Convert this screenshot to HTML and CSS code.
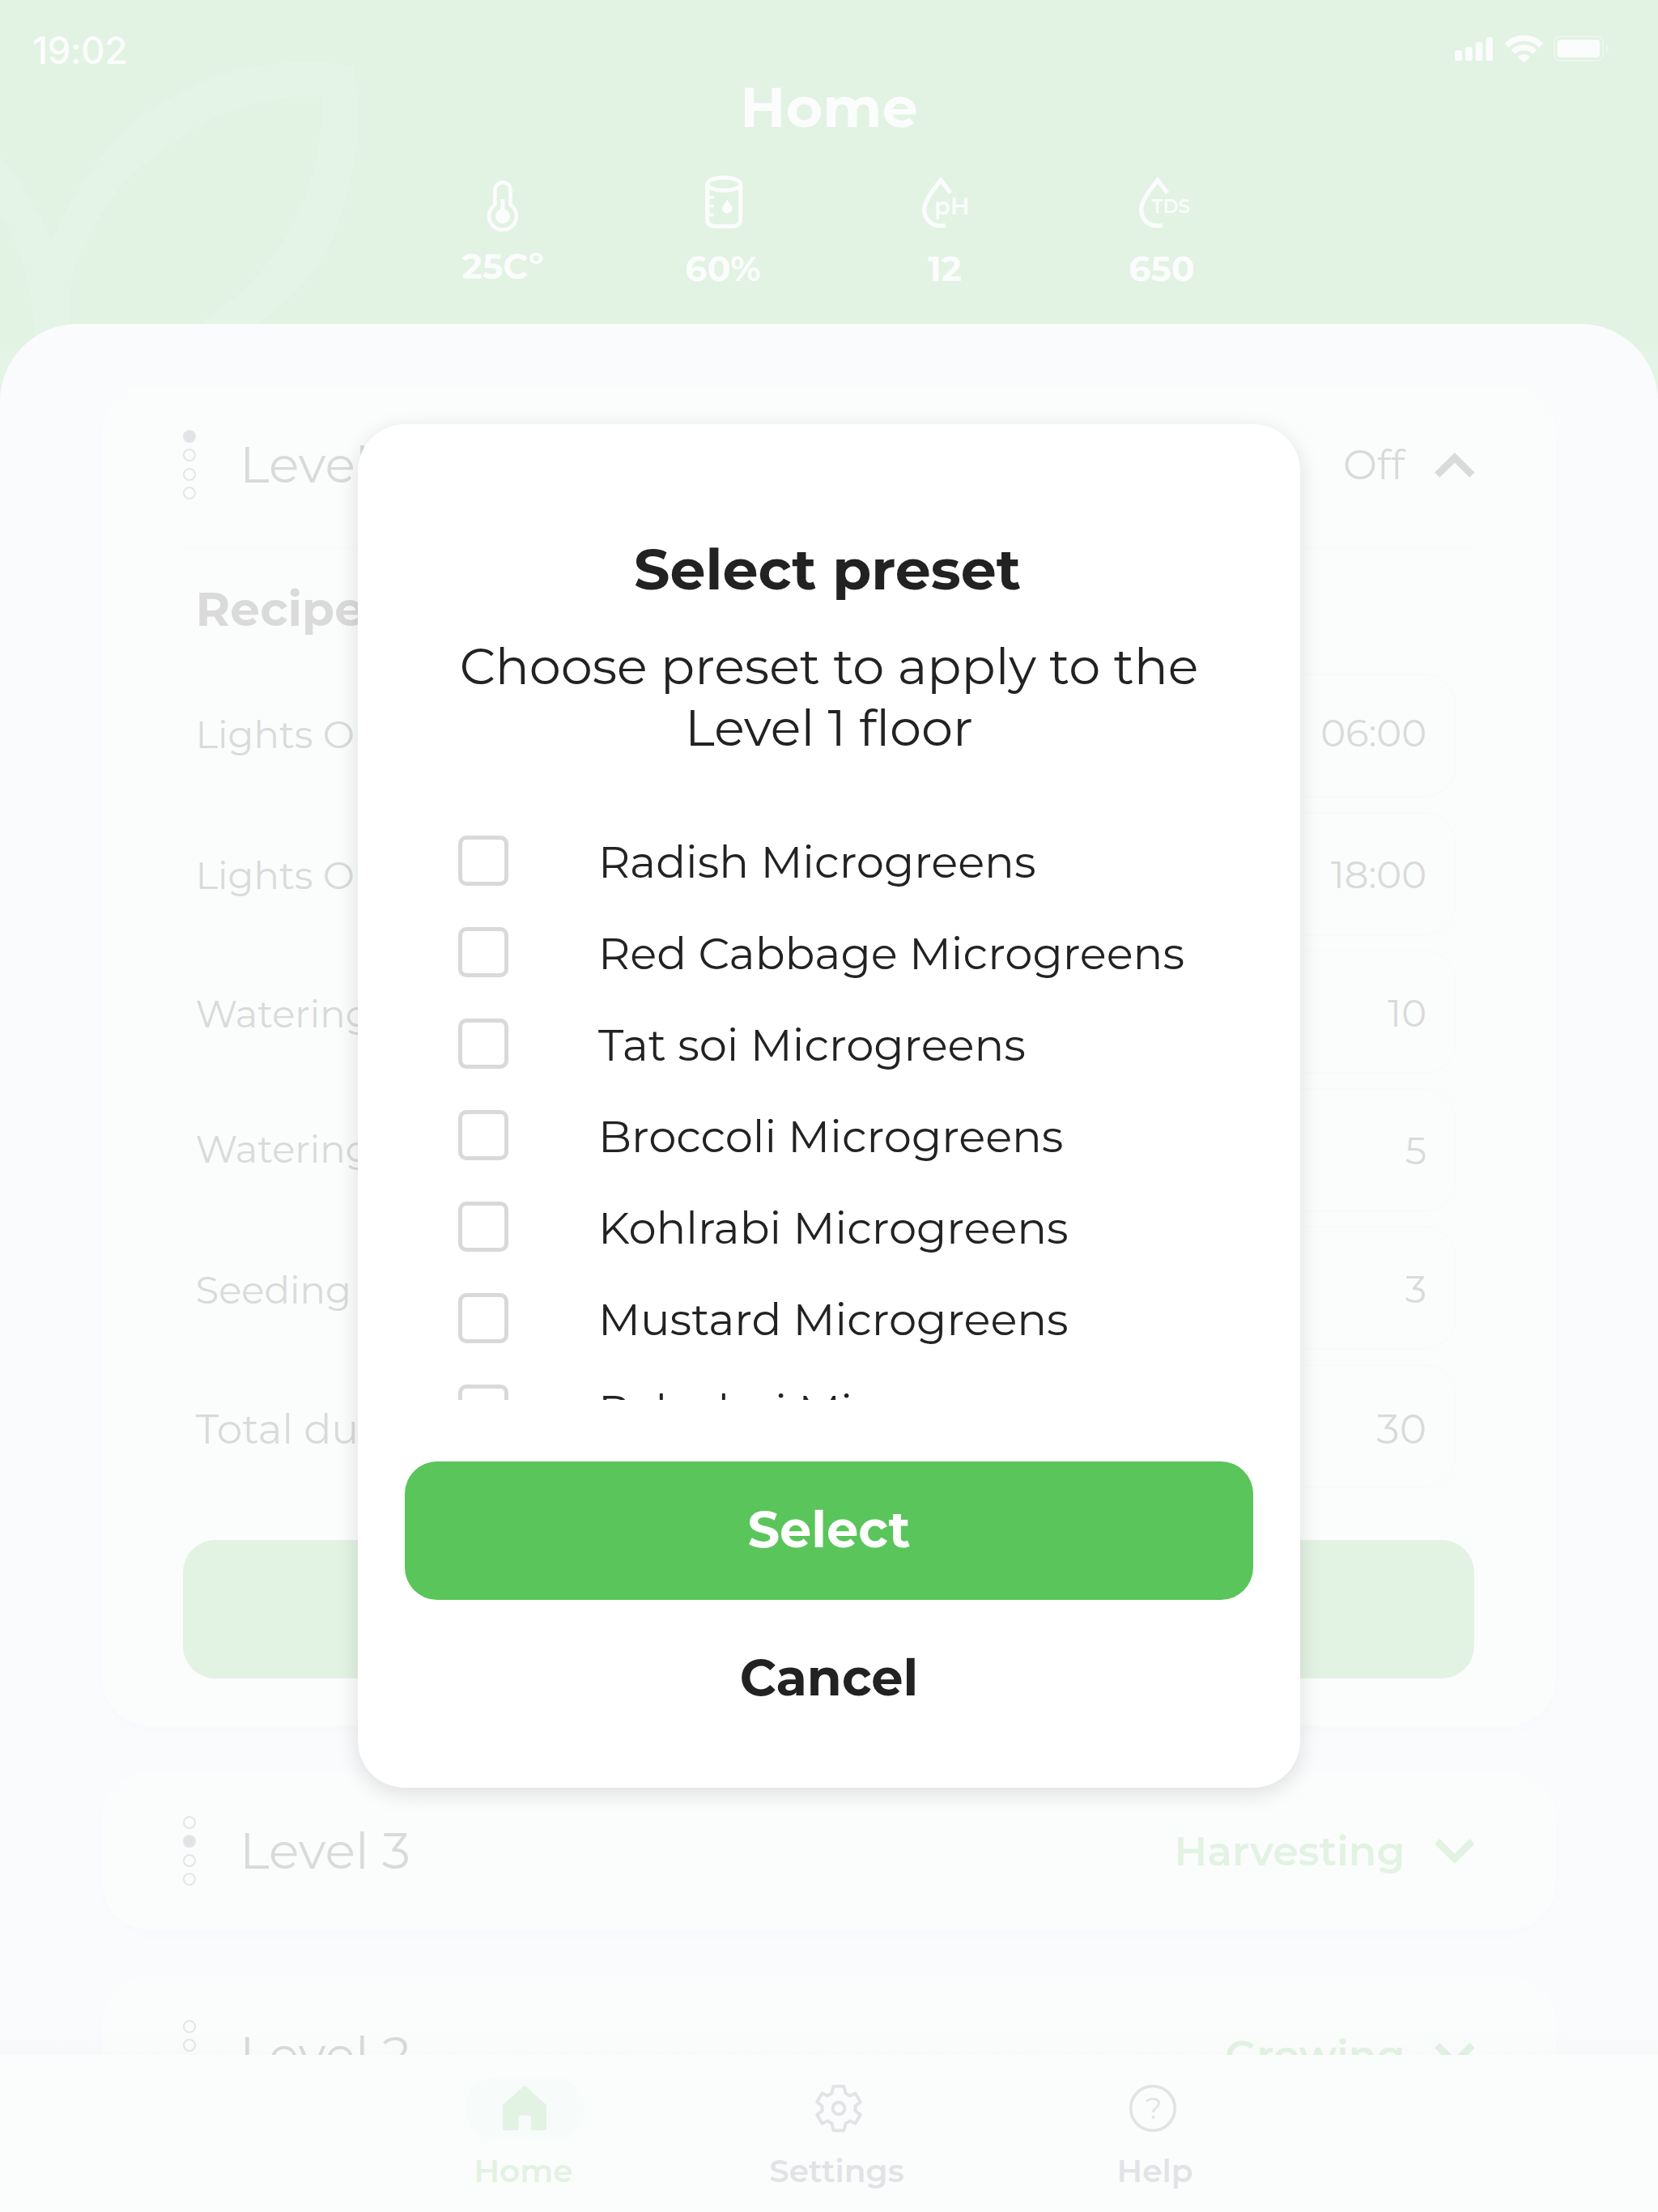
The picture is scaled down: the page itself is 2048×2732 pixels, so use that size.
FILE: index.html
```html
<!DOCTYPE html>
<html lang="en">
<head>
<meta charset="utf-8">
<title>Home</title>
<link rel="stylesheet" href="styles.css">
</head>
<body>
<div class="screen">
  <div class="header-bg">
    <svg width="2048" height="434" viewBox="0 0 2048 434" fill="#e4f4e6">
      <path d="M0 193C12 206 21 218 29 233C44 256 57 281 63 300C78 258 104 222 134 182C166 146 200 124 237 108C262 96 280 89 299 86C326 79 350 77 379 77C402 77 420 79 436 82C440 106 442 122 442 145C443 190 431 238 415 283C390 346 358 368 318 401L300 434H200L246 401C278 376 300 363 321 337C346 306 362 282 375 250C387 216 394 186 396 160C398 144 398 132 398 120C392 119 386 119 379 119C358 120 340 121 321 125C286 134 255 148 228 167C196 188 168 208 147 233C122 266 102 300 91 333C87 356 86 378 86 401V434H42V415C41 370 34 336 22 307C16 290 8 276 0 265Z"/>
    </svg>
  </div>

  <header class="header">
    <div class="status">
      <span class="time">19:02</span>
      <svg width="190" height="39" viewBox="1797 43 190 39" fill="#fbfdfc">
        <rect x="1797" y="62" width="9" height="13" rx="2.5"/>
        <rect x="1810" y="57.7" width="8.6" height="17.3" rx="2.5"/>
        <rect x="1822.6" y="52" width="8.6" height="23" rx="2.5"/>
        <rect x="1835.4" y="46" width="8.6" height="29" rx="2.5"/>
        <path d="M1861 56.1A30.2 30.2 0 0 1 1903.8 56.1M1869.1 64.2A18.8 18.8 0 0 1 1895.7 64.2" fill="none" stroke="#fbfdfc" stroke-width="7.2"/>
        <path d="M1882.4 77.5L1875 70A10.6 10.6 0 0 1 1889.8 70Z"/>
        <rect x="1920" y="45" width="60" height="30" rx="7" fill="none" stroke="#ecf6ee" stroke-width="2"/>
        <rect x="1923.7" y="49" width="52.4" height="22" rx="3.5"/>
        <path d="M1983.4 54.5C1988.2 56 1988.2 64 1983.4 65.5Z" fill="#ecf6ee"/>
      </svg>
    </div>
    <h1 class="title">Home</h1>
    <div class="metrics">
      <div class="metric metric-temp">
        <svg width="72" height="72" viewBox="585 216 72 72">
          <path d="M611.4 253V235a9.6 9.6 0 0 1 19.2 0V253a16.9 16.9 0 1 1-19.2 0Z" fill="none" stroke="#fbfdfc" stroke-width="4.6"/>
          <circle cx="621" cy="267" r="9" fill="#fbfdfc"/>
          <path d="M618.4 246h5.2v16h-5.2Z" fill="#fbfdfc"/>
        </svg>
        <span>25Cº</span>
      </div>
      <div class="metric">
        <svg width="72" height="72" viewBox="857 216 72 72" fill="none" stroke="#fbfdfc">
          <path d="M873.6 228V270q0 9.4 9.4 9.4h22.3q9.4 0 9.4-9.4V228" stroke-width="5"/>
          <path d="M873.6 243.7h8.4M873.6 254.5h8.4M873.6 265.5h8.4" stroke-width="3.6"/>
          <ellipse cx="894.2" cy="227.3" rx="20.5" ry="8" stroke-width="5"/>
          <path d="M898.3 246.5C901 251 904.6 254.5 904.6 257.8C904.6 261 901.7 263.5 898.3 263.5S892.2 261 892.2 257.8C892.2 254.5 895.6 251 898.3 246.5Z" fill="#fbfdfc" stroke="none"/>
        </svg>
        <span>60%</span>
      </div>
      <div class="metric metric-ph">
        <svg width="72" height="72" viewBox="1129 216 72 72">
          <path d="M1174 238.5L1162 222.5C1150 238 1141.7 249 1141.7 259C1141.7 270.5 1150.5 279 1162 279Q1165 279 1168 278" fill="none" stroke="#fbfdfc" stroke-width="5.4"/>
          <text x="1154" y="265" class="drop-label" font-size="29">pH</text>
        </svg>
        <span>12</span>
      </div>
      <div class="metric metric-tds">
        <svg width="72" height="72" viewBox="1401 216 72 72">
          <path d="M1442 238.5L1430 222.5C1418 238 1409.7 249 1409.7 259C1409.7 270.5 1418.5 279 1430 279Q1433 279 1436 278" fill="none" stroke="#fbfdfc" stroke-width="5.4"/>
          <text x="1422.5" y="262.8" class="drop-label" font-size="23.2">TDS</text>
        </svg>
        <span>650</span>
      </div>
    </div>
  </header>

  <main class="panel">
    <section class="card card-open">
      <div class="card-head">
        <div class="dots"><i class="on"></i><i></i><i></i><i></i></div>
        <h2 class="level">Level 4</h2>
        <span class="state off">Off</span>
        <svg class="chevron" width="50" height="31" viewBox="0 0 50 31"><path d="M0 24.5L24.9 0L49.5 24.5L43.3 30.8L24.9 12.5L6.3 30.8Z" fill="#dadada"/></svg>
      </div>
      <div class="divider"></div>
      <h3 class="recipe">Recipe</h3>
      <div class="rows">
        <div class="row"><span class="label">Lights ON</span><span class="field">06:00</span></div>
        <div class="row"><span class="label">Lights OFF</span><span class="field">18:00</span></div>
        <div class="row"><span class="label">Watering on</span><span class="field">10</span></div>
        <div class="row"><span class="label">Watering off</span><span class="field">5</span></div>
        <div class="row"><span class="label">Seeding</span><span class="field">3</span></div>
        <div class="row total"><span class="label">Total duration</span><span class="field">30</span></div>
      </div>
      <div class="card-button"></div>
    </section>
    <section class="card">
      <div class="card-head">
        <div class="dots"><i></i><i class="on"></i><i></i><i></i></div>
        <h2 class="level">Level 3</h2>
        <span class="state">Harvesting</span>
        <svg class="chevron" width="50" height="31" viewBox="0 0 50 31"><path d="M0 6.3L6.3 0L24.9 18.5L43.3 0L49.5 6.3L24.9 31Z" fill="#e2f2e3"/></svg>
      </div>
    </section>
    <section class="card">
      <div class="card-head">
        <div class="dots"><i></i><i></i><i class="on"></i><i></i></div>
        <h2 class="level">Level 2</h2>
        <span class="state">Growing</span>
        <svg class="chevron" width="50" height="31" viewBox="0 0 50 31"><path d="M0 6.3L6.3 0L24.9 18.5L43.3 0L49.5 6.3L24.9 31Z" fill="#e2f2e3"/></svg>
      </div>
    </section>
  </main>

  <nav class="nav">
    <a class="nav-item active">
      <span class="pill">
        <svg width="54" height="56" viewBox="0 0 54 56"><path d="M25.5 1Q27 -.4 28.5 1L54 24V52.5Q54 55 51.5 55H37.5Q35 55 35 52.5V40.5Q35 36.5 31 36.5H23.5Q19.5 36.5 19.5 40.5V52.5Q19.5 55 17 55H2.5Q0 55 0 52.5V24Z" fill="#e2f2e3"/></svg>
      </span>
      <span class="nav-label">Home</span>
    </a>
    <a class="nav-item">
      <span class="pill">
        <svg width="62" height="62" viewBox="-31 -31 62 62" fill="none" stroke="#e2e3e6" stroke-width="4" stroke-linejoin="round">
          <path d="M-6.3 -27.2H6.3L8.8 -18.4Q11.5 -17.3 13.8 -15.5L20.6 -18.6L26.8 -8L20.3 -2.7Q20.7 0 20.3 2.7L26.8 8L20.6 18.6L13.8 15.5Q11.5 17.3 8.8 18.4L6.3 27.2H-6.3L-8.8 18.4Q-11.5 17.3 -13.8 15.5L-20.6 18.6L-26.8 8L-20.3 2.7Q-20.7 0 -20.3 -2.7L-26.8 -8L-20.6 -18.6L-13.8 -15.5Q-11.5 -17.3 -8.8 -18.4Z"/>
          <circle r="7.4"/>
        </svg>
      </span>
      <span class="nav-label nav-settings">Settings</span>
    </a>
    <a class="nav-item">
      <span class="pill">
        <svg width="62" height="62" viewBox="-31 -31 62 62"><circle r="27.3" fill="none" stroke="#e2e3e6" stroke-width="3.8"/><text x="1" y="13" text-anchor="middle" class="question">?</text></svg>
      </span>
      <span class="nav-label nav-help">Help</span>
    </a>
  </nav>

  <div class="modal" role="dialog">
    <h2 class="modal-title">Select preset</h2>
    <p class="modal-text">Choose preset to apply to the<br>Level 1 floor</p>
    <div class="presets">
      <label class="preset"><i class="box"></i><span>Radish Microgreens</span></label>
      <label class="preset"><i class="box"></i><span>Red Cabbage Microgreens</span></label>
      <label class="preset"><i class="box"></i><span>Tat soi Microgreens</span></label>
      <label class="preset"><i class="box"></i><span>Broccoli Microgreens</span></label>
      <label class="preset"><i class="box"></i><span>Kohlrabi Microgreens</span></label>
      <label class="preset"><i class="box"></i><span>Mustard Microgreens</span></label>
      <label class="preset"><i class="box"></i><span>Pak choi Microgreens</span></label>
    </div>
    <button class="select">Select</button>
    <button class="cancel">Cancel</button>
  </div>
</div>
</body>
</html>
```
FILE: styles.css
```css
* { box-sizing: border-box; margin: 0; padding: 0; }

body {
  width: 2048px;
  height: 2732px;
  overflow: hidden;
  font-family: Montserrat, Inter, "Liberation Sans", sans-serif;
}

i { font-style: normal; }
svg { display: block; flex: none; }

.screen {
  position: relative;
  display: flex;
  flex-direction: column;
  width: 2048px;
  height: 2732px;
  background: #e4f4e6;
}

/* header */
.header-bg {
  position: absolute;
  inset: 0 0 auto;
  height: 434px;
  background: #e2f2e3;
}

.header {
  position: relative;
  flex: none;
  height: 400px;
  color: #fbfdfc;
}

.status {
  display: flex;
  align-items: center;
  justify-content: space-between;
  height: 92px;
  padding: 33px 61px 0 40px;
}

.time { font: 450 46px/59px Inter, sans-serif; letter-spacing: -.014em; }

.title {
  font-size: 69.7px;
  line-height: 80px;
  font-weight: 700;
  text-align: center;
}

.metrics {
  display: flex;
  justify-content: center;
  margin-top: 44px;
  padding-left: 10px;
}

.metric {
  display: flex;
  flex-direction: column;
  align-items: center;
  gap: 19px;
  width: 272px;
  font-size: 42.6px;
  line-height: 50px;
  font-weight: 700;
}

.metric-temp { gap: 16px; }
.metric-ph span { padding-left: 4px; }
.metric-tds span { padding-right: 4px; }
.drop-label { fill: #fbfdfc; font-weight: 600; }

/* level cards */
.panel {
  position: relative;
  flex: none;
  display: flex;
  flex-direction: column;
  gap: 58px;
  height: 2137.5px;
  padding: 77px 126px 0;
  overflow: hidden;
  border-radius: 96px 96px 0 0;
  background: #fafbfd;
}

.panel::after {
  content: "";
  position: absolute;
  inset: auto 0 0;
  height: 36px;
  background: linear-gradient(rgba(40, 0, 40, 0), rgba(40, 0, 40, .012));
  pointer-events: none;
}

.card {
  flex: none;
  padding: 0 100px;
  border-radius: 58px;
  background: #fbfdfc;
  box-shadow: 0 7px 12px #f8f9fc;
}

.card-open { height: 1654px; }

.card-head {
  display: flex;
  align-items: center;
  height: 194px;
}

.dots {
  display: flex;
  flex-direction: column;
  gap: 7.3px;
}

.dots i {
  width: 16px;
  height: 16px;
  border: 2px solid #e4e5e7;
  border-radius: 50%;
}

.dots .on { background: #e2e3e6; }

.level {
  margin: 0 auto 0 54px;
  color: #dadada;
  font-size: 62px;
  font-weight: 400;
}

.state {
  margin-right: 36.5px;
  color: #e2f2e3;
  font-size: 50.5px;
  font-weight: 600;
}

.off {
  margin-right: 37px;
  color: #dadada;
  font-size: 50px;
  font-weight: 400;
}

.divider {
  height: 3px;
  margin-top: 5px;
  background: #fafbfb;
}

.recipe {
  margin: 39px 0 44px 15.5px;
  color: #dadada;
  font-size: 58.3px;
  line-height: 70px;
  font-weight: 700;
}

.rows {
  display: flex;
  flex-direction: column;
  gap: 17.6px;
  padding: 0 23.5px 0 15.5px;
}

.row {
  display: flex;
  align-items: center;
  justify-content: space-between;
  height: 153px;
  color: #dadada;
  font-size: 46.6px;
  font-weight: 400;
}

.field {
  width: 500px;
  height: 153px;
  padding: 2px 34.5px 0 0;
  border: 2px solid #f9fafa;
  border-radius: 40px;
  line-height: 149px;
  text-align: right;
}

.row:nth-child(1) .label { margin-top: -3px; }
.row:nth-child(1) .field { padding-top: 0; line-height: 143px; }
.row:nth-child(2) .label { margin-top: 5px; }
.row:nth-child(2) .field { padding-top: 1px; }
.row:nth-child(3) .label { margin-top: 5px; }
.row:nth-child(4) .label { margin-top: -2px; }
.row:nth-child(4) .field { padding-top: 1px; }
.row:nth-child(5) .label { margin-top: 6px; }

.row.total { font-size: 50.4px; }
.row.total .label { margin-top: 8px; }
.row.total .field { padding-top: 4px; }

.card-button {
  height: 171px;
  margin: 64px 1px 0 0;
  border-radius: 40px;
  background: #e2f2e3;
}

/* bottom navigation */
.nav {
  flex: none;
  display: flex;
  justify-content: center;
  height: 194.5px;
  padding: 27.5px 0 0 24px;
  background: #fbfdfc;
}

.nav-item {
  display: flex;
  flex-direction: column;
  align-items: center;
  gap: 13px;
  width: 388px;
  color: #e2e3e6;
}

.pill {
  display: flex;
  align-items: center;
  justify-content: center;
  width: 147px;
  height: 78px;
  border-radius: 39px;
}

.active { color: #e2f2e3; }
.active .pill { background: #f7fbfa; }

.nav-label {
  padding-right: 3px;
  font-size: 39px;
  line-height: 50px;
  font-weight: 600;
}

.nav-settings { padding-right: 5px; }
.nav-help { padding: 0 0 0 5px; }
.question { fill: #e2e3e6; font-size: 37px; font-weight: 400; }

/* preset dialog */
.modal {
  position: absolute;
  left: 442px;
  top: 523.5px;
  display: flex;
  flex-direction: column;
  width: 1164px;
  height: 1684.5px;
  padding: 139px 58px 0;
  border-radius: 58px;
  background: #fff;
  box-shadow: 0 7px 28px rgba(0, 0, 0, .12);
  color: #222;
  text-align: center;
}

.modal-title {
  padding-right: 4px;
  font-size: 69.7px;
  line-height: 80px;
  font-weight: 700;
}

.modal-text {
  margin-top: 42px;
  font-size: 62.2px;
  line-height: 76.5px;
  font-weight: 400;
}

.presets {
  display: flex;
  flex-direction: column;
  gap: 51px;
  height: 696.5px;
  margin-top: 94.5px;
  padding-left: 66px;
  overflow: hidden;
}

.preset {
  display: flex;
  flex: none;
  gap: 111px;
  height: 62px;
  font-size: 54.45px;
  line-height: 66px;
  font-weight: 400;
  white-space: nowrap;
}

.box {
  width: 62px;
  height: 62px;
  border: 5px solid #d9d9d9;
  border-radius: 10px;
}

.select,
.cancel {
  border: 0;
  font: inherit;
  font-size: 62.2px;
  font-weight: 700;
}

.select {
  flex: none;
  height: 171px;
  margin-top: 76px;
  padding-bottom: 2px;
  border-radius: 40px;
  background: #5ac55a;
  color: #fff;
}

.cancel {
  height: 80px;
  margin-top: 56px;
  background: none;
  color: #222;
}
```
